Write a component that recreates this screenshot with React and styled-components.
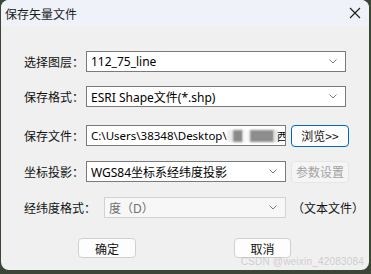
import styled, { createGlobalStyle } from "styled-components";

const Global = createGlobalStyle`
  html, body {
    margin: 0;
    padding: 0;
    background: #3c4637;
  }
  body {
    width: 371px;
    height: 274px;
    overflow: hidden;
    font-family: "Noto Sans CJK SC", "Noto Sans", sans-serif;
  }
`;

const Window = styled.div`
  position: relative;
  width: 368px;
  height: 270px;
  margin-left: 1px;
  border-radius: 8px;
  overflow: hidden;
  background: #f0f0f0;
  display: flex;
  flex-direction: column;
`;

const TitleBar = styled.div`
  height: 26px;
  background: #eff3f9;
  display: flex;
  align-items: center;
  justify-content: space-between;
  padding: 0 8px 0 4px;
  font-size: 12px;
  color: #1b1b1b;
`;

const Close = styled.div`
  width: 12px;
  height: 12px;
  display: flex;
`;

const Body = styled.div`
  flex: 1;
  padding: 25px 0 0 23px;
  display: flex;
  flex-direction: column;
`;

const Row = styled.div`
  display: flex;
  align-items: center;
  height: 21px;
  margin-top: ${(p) => p.$mt || 0}px;
`;

const Label = styled.div`
  width: ${(p) => p.$w}px;
  flex-shrink: 0;
  font-size: 12px;
  color: #111;
  white-space: nowrap;
`;

const Field = styled.div`
  box-sizing: border-box;
  width: ${(p) => p.$w}px;
  height: 21px;
  display: flex;
  align-items: center;
  justify-content: space-between;
  padding: 0 ${(p) => p.$pr ?? 8}px 0 4px;
  background: ${(p) => (p.$disabled ? "#f7f7f7" : "#fff")};
  border: 1px solid ${(p) => (p.$disabled ? "#d2d2d2" : "#7a7a7a")};
  font-family: "Noto Sans", "Noto Sans CJK SC", sans-serif;
  font-size: 12px;
  color: ${(p) => (p.$disabled ? "#6d6d6d" : "#000")};
  white-space: nowrap;
  overflow: hidden;
`;

const PathText = styled.div`
  display: flex;
  align-items: center;
  overflow: hidden;
  font-size: 11.5px;
`;

const Blur = styled.span`
  display: inline-block;
  flex-shrink: 0;
  width: ${(p) => p.$w}px;
  height: 12px;
  background: ${(p) => p.$c};
  filter: blur(1px);
`;

const Button = styled.div`
  box-sizing: border-box;
  width: ${(p) => p.$w}px;
  height: ${(p) => p.$h || 20}px;
  margin-left: ${(p) => p.$ml || 0}px;
  display: flex;
  align-items: center;
  justify-content: center;
  border-radius: 4px;
  font-size: 12px;
  background: ${(p) => (p.$disabled ? "#f5f5f5" : "#fdfdfd")};
  border: 1px solid
    ${(p) => (p.$focus ? "#0067c0" : p.$disabled ? "#e6e6e6" : "#d0d0d0")};
  color: ${(p) => (p.$disabled ? "#a2a2a2" : "#111")};
`;

const Note = styled.div`
  margin-left: 6px;
  font-size: 12px;
  color: #111;
  white-space: nowrap;
`;

const Footer = styled.div`
  display: flex;
  margin-top: 20px;
  padding-left: 54px;
`;

const Watermark = styled.div`
  position: absolute;
  right: 5px;
  bottom: 3px;
  font-family: "Liberation Sans", Arial, sans-serif;
  font-size: 10px;
  line-height: 11px;
  color: rgba(175, 175, 175, 0.55);
  letter-spacing: 0.2px;
`;

function Chevron() {
  return (
    <svg width="8" height="5" viewBox="0 0 8 5">
      <path d="M0.5 0.5 L4 4 L7.5 0.5" fill="none" stroke="#7a7a7a" strokeWidth="1" />
    </svg>
  );
}

function CloseIcon() {
  return (
    <svg width="12" height="12" viewBox="0 0 12 12">
      <path d="M1 1 L11 11 M11 1 L1 11" stroke="#1b1b1b" strokeWidth="1.1" />
    </svg>
  );
}

export default function App() {
  return (
    <>
      <Global />
      <Window>
        <TitleBar>
          <span>保存矢量文件</span>
          <Close>
            <CloseIcon />
          </Close>
        </TitleBar>
        <Body>
          <Row>
            <Label $w={62}>选择图层：</Label>
            <Field $w={260}>
              112_75_line
              <Chevron />
            </Field>
          </Row>
          <Row $mt={14}>
            <Label $w={62}>保存格式：</Label>
            <Field $w={260}>
              ESRI Shape文件(*.shp)
              <Chevron />
            </Field>
          </Row>
          <Row $mt={18}>
            <Label $w={62}>保存文件：</Label>
            <Field $w={200} $pr={0}>
              <PathText>
                C:\Users\38348\Desktop\
                <Blur $w={6} $c="#ececec" />
                <Blur $w={10} $c="#8a8a8a" />
                <Blur $w={7} $c="#f8f8f8" />
                <Blur $w={24} $c="#8c8c8c" />
                <Blur $w={3} $c="#dcdcdc" />
                <span>西</span>
              </PathText>
            </Field>
            <Button $w={58} $h={22} $ml={5} $focus>
              浏览&gt;&gt;
            </Button>
          </Row>
          <Row $mt={15}>
            <Label $w={62}>坐标投影：</Label>
            <Field $w={200}>
              WGS84坐标系经纬度投影
              <Chevron />
            </Field>
            <Button $w={58} $h={22} $ml={5} $disabled>
              参数设置
            </Button>
          </Row>
          <Row $mt={15}>
            <Label $w={80}>经纬度格式：</Label>
            <Field $w={182} $disabled>
              度（D）
              <Chevron />
            </Field>
            <Note>（文本文件）</Note>
          </Row>
          <Footer>
            <Button $w={58}>确定</Button>
            <Button $w={57} $ml={98}>取消</Button>
          </Footer>
        </Body>
        <Watermark>CSDN @weixin_42083084</Watermark>
      </Window>
    </>
  );
}
